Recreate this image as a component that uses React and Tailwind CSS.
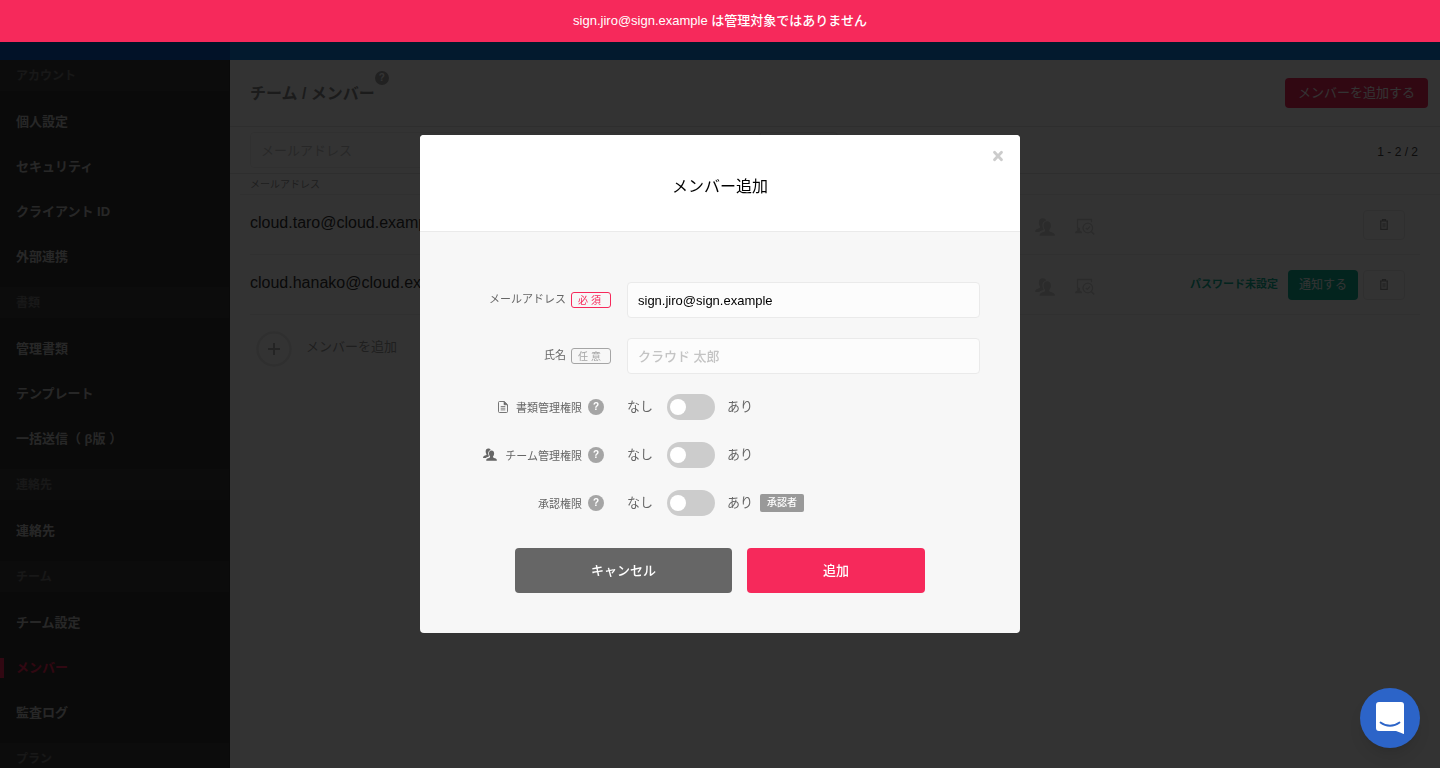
import { useState } from 'react'

const menu = [
  { title: 'アカウント', items: ['個人設定', 'セキュリティ', 'クライアント ID', '外部連携'] },
  { title: '書類', items: ['管理書類', 'テンプレート', '一括送信（ β版 ）'] },
  { title: '連絡先', items: ['連絡先'] },
  { title: 'チーム', items: ['チーム設定', 'メンバー', '監査ログ'] },
  { title: 'プラン', items: [] },
]

const members = [
  { email: 'cloud.taro@cloud.example', pending: false },
  { email: 'cloud.hanako@cloud.example', pending: true },
]

function PeopleIcon({ className }) {
  return (
    <svg viewBox="0 0 20 18" className={className} fill="currentColor" aria-hidden="true">
      <path d="M7.500.3c2 0 3.200.9 3.600 2.100-2.400.5-3.800 2.500-3.700 5.100.1 1.500.5 2.700 1.200 3.700-.1.600-.5.900-1.100 1.100-1.500.5-2.700.9-3.500 1.700H.8c-.5 0-.8-.3-.7-.8.3-1.800 2-2.300 4-3 .8-.3 1.100-.8.9-1.700C4.200 7.600 3.800 6.300 3.800 4.800 3.800 2 5.200.3 7.500.3z" />
      <path d="M12.200 3.200c2.300 0 3.700 1.700 3.700 4.300 0 1.900-.6 3.400-1.600 4.500-.2.900.1 1.400.9 1.700 2.300.8 4.400 1.300 4.700 3.200.1.600-.2.900-.7.900H5.200c-.5 0-.8-.3-.7-.9.3-1.900 2.400-2.400 4.700-3.200.8-.3 1.100-.8.900-1.700-1-1.100-1.600-2.600-1.600-4.500 0-2.600 1.400-4.300 3.700-4.300z" />
    </svg>
  )
}

function ApproveIcon({ className }) {
  return (
    <svg viewBox="0 0 20 18" className={className} fill="none" stroke="currentColor" aria-hidden="true">
      <path d="M2.500 10V1.500h14v2.700" strokeWidth="1.300" />
      <path d="M0 15.200c.2-1.700 1.200-2.200 2.500-2.600-.8-1.500-.4-3 1.100-3s1.900 1.500 1.100 3c1.300.4 2.300.9 2.500 2.600z" fill="currentColor" stroke="none" />
      <circle cx="12.800" cy="10" r="4.800" strokeWidth="1.300" />
      <path d="M16.300 13.500l3 3" strokeWidth="1.700" />
      <path d="M10.800 10l1.500 1.500 2.700-3" strokeWidth="1.200" />
    </svg>
  )
}

function FileIcon({ className }) {
  return (
    <svg viewBox="0 0 10 12" className={className} fill="none" stroke="currentColor" aria-hidden="true">
      <path d="M1.500.5h4.700l3.300 3.200v6.800a1 1 0 0 1-1 1h-7a1 1 0 0 1-1-1v-9a1 1 0 0 1 1-1z" strokeWidth=".9" />
      <path d="M6 .7v3.100h3.300z" fill="currentColor" strokeWidth=".6" />
      <path d="M2.700 5.500h4.600M2.700 7.200h4.600M2.700 8.900h4.600" strokeWidth=".8" />
    </svg>
  )
}

function TrashIcon() {
  return (
    <svg viewBox="0 0 8 11" className="h-[11px] w-2" fill="none" stroke="currentColor" aria-hidden="true">
      <path d="M0 2h8M2.500 1.800V.6h3v1.200M.8 2v8.300h6.400V2" strokeWidth="1.200" />
      <path d="M3.100 4v4.500M4.900 4v4.500" strokeWidth=".9" />
    </svg>
  )
}

function Help({ className = 'h-4 w-4' }) {
  return (
    <button
      type="button"
      aria-label="ヘルプ"
      className={`flex shrink-0 items-center justify-center rounded-full bg-[#a5a5a5] text-[10px] font-bold leading-none text-white ${className}`}
    >
      ?
    </button>
  )
}

function Sidebar() {
  return (
    <nav className="w-[230px] shrink-0 border-r border-[#323232] bg-[#323232] text-[13px] font-bold">
      {menu.map((group) => (
        <section key={group.title}>
          <h2 className="h-[31px] bg-[#3f3f3f] px-4 text-[12px] leading-8 text-[#777]">{group.title}</h2>
          <ul className="py-2">
            {group.items.map((item) => (
              <li key={item} className="flex h-[45px] items-center">
                <a
                  href="#"
                  className={
                    item === 'メンバー'
                      ? 'border-l-4 border-[#f6295b] pl-3 leading-5 text-[#f6295b]'
                      : 'pl-4 leading-5 text-[#c4c4c4]'
                  }
                >
                  {item}
                </a>
              </li>
            ))}
          </ul>
        </section>
      ))}
    </nav>
  )
}

function TrashButton() {
  return (
    <button type="button" aria-label="削除" className="flex h-[30px] w-[42px] items-center justify-center rounded border border-[#eaeaea] text-[#999]">
      <TrashIcon />
    </button>
  )
}

function MembersPage() {
  return (
    <main className="min-w-0 grow bg-white">
      <div className="flex h-[67px] items-start justify-between border-b border-[#e6e6e6] pl-5 pr-3 pt-[18px]">
        <div className="flex">
          <h1 className="pt-1 text-[16px] font-bold leading-6 text-[#888]">チーム / メンバー</h1>
          <Help className="-mt-[7px] h-[14px] w-[14px]" />
        </div>
        <button type="button" className="h-[30px] rounded bg-[#f6295b] px-[13px] text-[13px] leading-7 text-white">
          メンバーを追加する
        </button>
      </div>
      <div className="flex h-[47px] items-center justify-between border-b border-[#e6e6e6] pl-5 pr-[22px]">
        <div className="flex">
          <input
            type="text"
            aria-label="メールアドレス"
            placeholder="メールアドレス"
            className="h-9 w-[510px] rounded-l border border-[#f0f0f0] px-[10px] text-[13px] placeholder:text-[#c4c4c4]"
          />
          <button type="button" aria-label="検索" className="h-9 w-[78px] rounded-r border border-[#eaeaea]" />
        </div>
        <span className="pt-1 text-[12px] text-[#444]">1 - 2 / 2</span>
      </div>
      <div className="ml-[10px] h-[21px] border-b border-[#f0f0f0] pl-[10px] text-[10px] leading-[22px] text-[#999]">メールアドレス</div>
      <ul className="px-5">
        {members.map((member) => (
          <li key={member.email} className="flex h-[60px] items-center border-b border-[#f0f0f0] pr-[15px]">
            <span className="w-[785px] shrink-0 pb-1 text-[16px] text-[#333]">{member.email}</span>
            <PeopleIcon className="mr-5 mt-1 h-[18px] w-5 text-[#d4d4d4]" />
            <ApproveIcon className="mt-1 h-[18px] w-5 text-[#d4d4d4]" />
            <div className="ml-auto flex items-center">
              {member.pending && (
                <>
                  <span className="mr-[10px] text-[11px] font-bold text-[#0fb297]">パスワード未設定</span>
                  <button type="button" className="mr-[5px] h-[30px] w-[70px] rounded bg-[#0fb297] text-[12px] text-white">
                    通知する
                  </button>
                </>
              )}
              <TrashButton />
            </div>
          </li>
        ))}
      </ul>
      <button type="button" className="ml-[26px] mt-4 flex text-[13px] text-[#999]">
        <svg viewBox="0 0 36 36" className="mr-[14px] h-9 w-9" fill="none" stroke="currentColor" aria-hidden="true">
          <circle cx="18" cy="18" r="16.500" stroke="#ebebeb" strokeWidth="2.500" />
          <path d="M12 18h12M18 12v12" stroke="#b4b4b4" strokeWidth="2" />
        </svg>
        <span className="leading-8">メンバーを追加</span>
      </button>
    </main>
  )
}

function Field({ id, label, required, children }) {
  return (
    <div className="mb-5 flex items-center">
      <div className="flex w-[151px] shrink-0 items-center justify-end">
        <label htmlFor={id} className="pb-[2px] text-[11px] leading-4 text-[#666]">{label}</label>
        <span
          className={`ml-[5px] h-4 w-10 rounded-[3px] border pl-[6px] text-[10px] leading-4 tracking-[3px] ${
            required ? 'border-[#f6295b] text-[#f6295b]' : 'border-[#a5a5a5] text-[#a5a5a5]'
          }`}
        >
          {required ? '必須' : '任意'}
        </span>
      </div>
      {children}
    </div>
  )
}

function Permission({ id, label, icon, badge }) {
  const [on, setOn] = useState(false)

  return (
    <div className="mb-[22px] flex h-[26px] items-center text-[13px] text-[#666]">
      <div className="flex w-36 shrink-0 items-center justify-end">
        {icon}
        <label htmlFor={id} className="pt-[2px] text-[11px] leading-4">{label}</label>
        <Help className="ml-[6px] h-4 w-4" />
      </div>
      <span className="ml-[23px] w-10">なし</span>
      <span className="relative h-[26px] w-12">
        <input
          id={id}
          type="checkbox"
          checked={on}
          onChange={(e) => setOn(e.target.checked)}
          className="peer h-[26px] w-12 appearance-none rounded-full bg-[#ccc] checked:bg-[#0fb297]"
        />
        <span className="pointer-events-none absolute left-[3px] top-[5px] h-4 w-4 rounded-full bg-white peer-checked:left-[29px]" />
      </span>
      <span className="ml-3">あり</span>
      {badge && <span className="ml-[7px] h-[18px] rounded-[2px] bg-[#999] px-[7px] text-[10px] font-medium leading-[18px] text-white">{badge}</span>}
    </div>
  )
}

function AddMemberModal() {
  const [email, setEmail] = useState('sign.jiro@sign.example')
  const [name, setName] = useState('')
  const inputClass = 'ml-4 h-9 min-w-0 grow rounded border border-[#eaeaea] bg-[#fcfcfc] px-[10px] text-[13px] text-black placeholder:font-medium placeholder:text-[#c4c4c4]'

  return (
    <div role="dialog" aria-labelledby="modal-title" className="relative w-[600px] overflow-hidden rounded bg-[#f7f7f7]">
      <button type="button" aria-label="閉じる" className="absolute right-4 top-[15px] text-[#ccc]">
        <svg viewBox="0 0 12 12" className="h-3 w-3" stroke="currentColor" strokeWidth="2.800" strokeLinecap="round" aria-hidden="true">
          <path d="M2.500 2.200l7 7.600M9.500 2.200l-7 7.600" />
        </svg>
      </button>
      <header className="border-b border-[#eaeaea] bg-white pb-8 pt-10 text-center">
        <h2 id="modal-title" className="text-[16px] leading-6 text-black">メンバー追加</h2>
      </header>
      <form className="px-10 pb-10 pt-[50px]" onSubmit={(e) => e.preventDefault()}>
        <Field id="email" label="メールアドレス" required>
          <input id="email" type="text" value={email} onChange={(e) => setEmail(e.target.value)} className={inputClass} />
        </Field>
        <Field id="name" label="氏名">
          <input id="name" type="text" value={name} onChange={(e) => setName(e.target.value)} placeholder="クラウド 太郎" className={inputClass} />
        </Field>
        <Permission id="docs" label="書類管理権限" icon={<FileIcon className="mr-2 h-3 w-[10px]" />} />
        <Permission id="team" label="チーム管理権限" icon={<PeopleIcon className="mb-[2px] mr-2 h-[13px] w-[14px]" />} />
        <Permission id="approve" label="承認権限" badge="承認者" />
        <div className="mt-8 flex justify-center gap-[15px] text-[13px] font-medium text-white">
          <button type="button" className="h-[45px] w-[217px] rounded bg-[#666]">キャンセル</button>
          <button type="submit" className="h-[45px] w-[178px] rounded bg-[#f6295b]">追加</button>
        </div>
      </form>
    </div>
  )
}

export default function App() {
  return (
    <div className="relative h-screen overflow-hidden font-['Liberation_Sans','Noto_Sans_CJK_JP',sans-serif]">
      <div className="flex h-full flex-col">
        <div className="flex h-[60px] shrink-0">
          <div className="w-[230px] bg-[#0a5ac8]" />
          <div className="grow bg-[#0f82e6]" />
        </div>
        <div className="flex min-h-0 grow overflow-hidden">
          <Sidebar />
          <MembersPage />
        </div>
      </div>

      {/* モーダル */}
      <div className="fixed inset-0 flex items-center justify-center bg-black/80">
        <AddMemberModal />
      </div>

      {/* エラー通知 */}
      <div role="alert" className="fixed inset-x-0 top-0 bg-[#f6295b] py-[11px] text-center text-[13px] font-medium leading-5 text-white">
        sign.jiro@sign.example は管理対象ではありません
      </div>

      {/* チャット */}
      <button type="button" aria-label="チャットを開く" className="fixed bottom-5 right-5 flex h-[60px] w-[60px] items-center justify-center rounded-full bg-[#2c64c8] shadow-lg">
        <svg viewBox="0 0 28 32" className="h-8 w-7" aria-hidden="true">
          <path d="M3 0h22a3 3 0 0 1 3 3v29s-4.500-1.500-8-3H3a3 3 0 0 1-3-3V3a3 3 0 0 1 3-3z" fill="#fff" />
          <path d="M4.500 20.500c5.500 4.300 13.500 4.300 19 0" fill="none" stroke="#2c64c8" strokeWidth="1.800" strokeLinecap="round" />
        </svg>
      </button>
    </div>
  )
}
